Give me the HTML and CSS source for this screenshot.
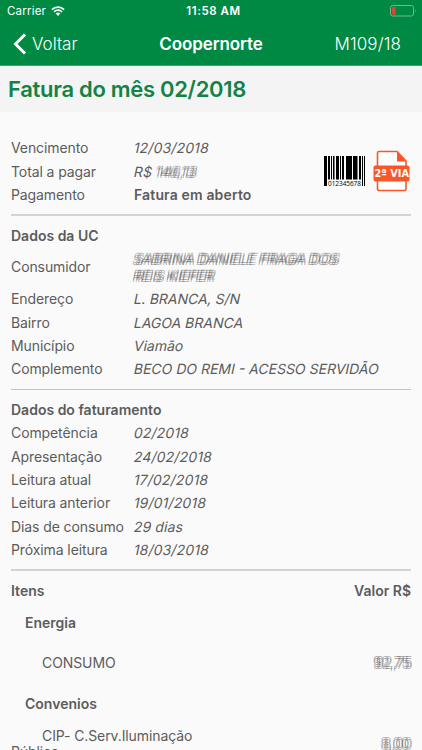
FILE: index.html
```html
<!DOCTYPE html>
<html lang="pt-BR">
<head>
    <meta charset="UTF-8">
    <meta name="viewport" content="width=device-width, initial-scale=1.0">
    <title>Coopernorte</title>
    <link rel="stylesheet" href="styles.css">
</head>
<body>
    <header class="topbar">
        <div class="status">
            <span class="carrier">
                Carrier
                <svg class="wifi" viewBox="0 0 14 10" width="14" height="10">
                    <path d="M0.9 3.6 A8.8 8.8 0 0 1 13.1 3.6" />
                    <path d="M3 5.8 A5.8 5.8 0 0 1 11 5.8" />
                    <path class="dot" d="M4.7 7.6 A3.4 3.4 0 0 1 9.3 7.6 L7 10 Z" />
                </svg>
            </span>
            <span class="clock">11:58 AM</span>
            <svg class="battery" viewBox="0 0 27 12" width="27" height="12">
                <rect class="case" x="0.5" y="0.5" width="23" height="10.5" rx="2" />
                <rect class="charge" x="2" y="2" width="3.6" height="7.5" rx="0.5" />
                <path class="tip" d="M25 4 Q26.5 5.7 25 7.5 Z" />
            </svg>
        </div>
        <nav class="nav">
            <a class="back" href="#">
                <svg viewBox="0 0 14 22" width="14" height="22">
                    <path d="M12 1.5 L2.5 11 L12 20.5" />
                </svg>
                <span>Voltar</span>
            </a>
            <span class="nav-title">Coopernorte</span>
            <span class="nav-code">M109/18</span>
        </nav>
    </header>

    <h1 class="title">Fatura do mês 02/2018</h1>

    <main class="invoice">
        <section class="summary">
            <dl class="fields dates">
                <dt>Vencimento</dt><dd>12/03/2018</dd>
                <dt>Total a pagar</dt><dd>R$ <span class="masked">146,13</span></dd>
                <dt>Pagamento</dt><dd class="strong">Fatura em aberto</dd>
            </dl>
            <div class="actions">
                <svg class="barcode" viewBox="0 0 41 30" width="41" height="30">
                    <path d="M0 0h3v30h-3z M4 0h2v23.500h-2z M7 0h1v23.500h-1z M9 0h1.500v23.500h-1.500z M12 0h3v23.500h-3z M16 0h1v23.500h-1z M18 0h2v23.500h-2z M22 0h6v23.500h-6z M29 0h4.500v23.500h-4.500z M35 0h2v23.500h-2z M38 0h1v30h-1z M40 0h1v30h-1z" />
                    <text x="4" y="29.500" textLength="33">012345678</text>
                </svg>
                <svg class="second-copy" viewBox="0 0 37 42" width="37" height="42">
                    <path class="page" d="M4.500 16V3q0-1.500 1.500-1.500H24L33 11V39q0 1.500-1.500 1.500H6q-1.500 0-1.500-1.500Z" />
                    <path class="fold" d="M24 1V11.500H33.500Z" />
                    <rect class="band" x="0.500" y="15.500" width="36" height="16" rx="2" />
                    <text x="1.500" y="27" textLength="34.500" lengthAdjust="spacingAndGlyphs">2ª VIA</text>
                </svg>
            </div>
        </section>
        <hr class="thick">

        <h2>Dados da UC</h2>
        <dl class="fields">
            <dt class="tall">Consumidor</dt>
            <dd class="tall"><span class="masked">SABRINA DANIELE FRAGA DOS</span><span class="masked">REIS KIEFER</span></dd>
            <dt>Endereço</dt><dd>L. BRANCA, S/N</dd>
            <dt>Bairro</dt><dd>LAGOA BRANCA</dd>
            <dt>Município</dt><dd>Viamão</dd>
            <dt>Complemento</dt><dd>BECO DO REMI - ACESSO SERVIDÃO</dd>
        </dl>
        <hr class="thin">

        <h2>Dados do faturamento</h2>
        <dl class="fields dates">
            <dt>Competência</dt><dd>02/2018</dd>
            <dt>Apresentação</dt><dd>24/02/2018</dd>
            <dt>Leitura atual</dt><dd>17/02/2018</dd>
            <dt>Leitura anterior</dt><dd>19/01/2018</dd>
            <dt>Dias de consumo</dt><dd>29 dias</dd>
            <dt>Próxima leitura</dt><dd>18/03/2018</dd>
        </dl>
        <hr class="thick">

        <div class="items-head"><h2>Itens</h2><h2>Valor R$</h2></div>
        <h3>Energia</h3>
        <div class="item">
            <span class="item-name">CONSUMO</span>
            <span class="masked">92,75</span>
        </div>
        <h3>Convenios</h3>
        <div class="item">
            <span class="item-name">CIP- C.Serv.Iluminação<br>Pública</span>
            <span class="masked">8,00</span>
        </div>
    </main>
</body>
</html>
```

FILE: styles.css
```css
* {
    margin: 0;
    padding: 0;
    box-sizing: border-box;
}

body {
    height: 750px;
    overflow: hidden;
    font-family: Inter, "Liberation Sans", sans-serif;
    font-size: 14px;
    line-height: 16.5px;
    color: #5c5c5c;
    background-color: #fafafa;
}

.topbar {
    height: 66px;
    color: #fff;
    background-color: #008943;
    border-bottom: 1px solid #45a270;
}

.status,
.nav {
    display: grid;
    grid-template-columns: 1fr auto 1fr;
    align-items: center;
}

.status {
    height: 22px;
    padding: 0 5px 0 7px;
    font-size: 11.5px;
}

.carrier {
    display: flex;
    align-items: center;
    gap: 5px;
    letter-spacing: 0.2px;
}

.wifi path {
    fill: none;
    stroke: #fff;
    stroke-width: 1.7;
}

.wifi .dot {
    fill: #fff;
    stroke: none;
}

.clock {
    margin-left: 3px;
    font-weight: 600;
    letter-spacing: 0.55px;
}

.battery {
    justify-self: end;
}

.case {
    fill: none;
    stroke: #73b78f;
}

.charge {
    fill: #e5432f;
}

.tip {
    fill: #73b78f;
}

.nav {
    height: 43px;
    padding: 0 17px;
    font-size: 17px;
    line-height: 20px;
}

.back {
    display: flex;
    align-items: center;
    gap: 5px;
    margin-left: -4px;
    color: #fff;
    text-decoration: none;
}

.back span,
.nav-code {
    font-weight: 350;
}

.back path {
    fill: none;
    stroke: #fff;
    stroke-width: 3;
}

.nav-title {
    font-weight: 600;
    letter-spacing: -0.1px;
}

.nav-code {
    justify-self: end;
    margin-right: 4px;
    letter-spacing: 0.1px;
}

.title {
    height: 46px;
    padding-left: 8px;
    font-size: 22px;
    font-weight: 600;
    line-height: 47px;
    letter-spacing: -0.3px;
    color: #128345;
    background-color: #f4f4f4;
}

.invoice {
    padding: 25px 11px 0;
}

.summary {
    display: flex;
    justify-content: space-between;
    height: 70px;
}

.fields {
    display: grid;
    grid-template-columns: 123px auto;
    grid-auto-rows: minmax(23.4px, auto);
    align-items: center;
    justify-content: start;
    white-space: nowrap;
}

.fields dt {
    letter-spacing: -0.1px;
}

/* slanted roman, keeps the two-storey "a" */
.fields dd {
    transform: skewX(-12deg);
}

.dates dd {
    letter-spacing: 0.15px;
}

.fields .strong {
    font-weight: 600;
    transform: none;
}

.fields .tall {
    padding: 3.7px 0;
}

.fields dd.tall {
    transform: none;
}

.tall .masked {
    display: block;
    transform: skewX(-12deg);
}

.masked {
    font-weight: 300;
    color: transparent;
    text-shadow: -1.5px -1px 0 rgba(92, 92, 92, 0.45), 1.5px -1px 0 rgba(92, 92, 92, 0.45), -1.5px 1px 0 rgba(92, 92, 92, 0.45), 1.5px 1px 0 rgba(92, 92, 92, 0.45);
}

.actions {
    display: flex;
    gap: 8px;
    padding: 12.5px 1px 0 0;
}

.barcode {
    margin-top: 6.5px;
}

.barcode text {
    font-family: "Open Sans", sans-serif;
    font-size: 6.5px;
    fill: #000;
}

.barcode path {
    fill: #000;
}

.page {
    fill: #fff;
    stroke: #f9572a;
    stroke-width: 1.6;
}

.fold,
.band {
    fill: #f9572a;
}

.second-copy text {
    font-family: "DejaVu Sans", sans-serif;
    font-size: 10px;
    font-weight: bold;
    fill: #fff;
}

hr {
    border: 0;
    background-color: #d3d3d3;
}

.thick {
    height: 2px;
    margin: 7px 0 8px;
}

.thin {
    height: 1px;
    margin: 8px 0;
    background-color: #c4c4c4;
}

h2 {
    font-size: 14px;
    font-weight: 600;
    line-height: 23.4px;
}

h3 {
    padding-left: 14px;
    font-size: 14px;
    font-weight: 600;
    line-height: 40.5px;
}

.items-head {
    display: flex;
    justify-content: space-between;
}

.item {
    display: flex;
    align-items: center;
    justify-content: space-between;
    min-height: 40.5px;
}

.item-name {
    text-indent: 31px;
    letter-spacing: -0.1px;
}
```
